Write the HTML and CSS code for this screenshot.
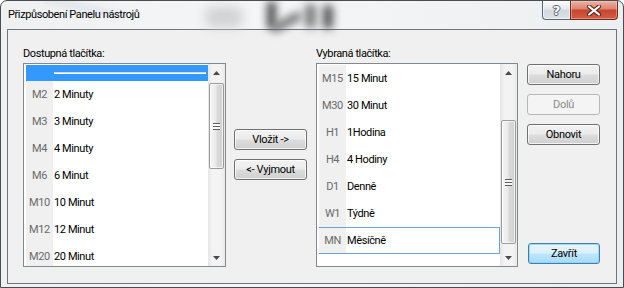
FILE: index.html
```html
<!DOCTYPE html>
<html lang="cs">
<head>
    <meta charset="UTF-8">
    <title>Přizpůsobení Panelu nástrojů</title>
    <link rel="stylesheet" href="styles.css">
</head>
<body>
    <div class="window">
        <div class="titlebar">
            <!-- blurred desktop behind the glass frame -->
            <div class="blob blob-a"></div>
            <div class="blob blob-b"></div>
            <div class="blob blob-c"></div>
            <div class="blob blob-d"></div>
            <div class="blob blob-e"></div>
            <div class="blob blob-f"></div>
            <span class="title">Přizpůsobení Panelu nástrojů</span>
            <div class="caption">
                <div class="cap-btn help"><span class="help-mark">?</span></div>
                <div class="cap-btn close">
                    <svg width="16" height="11" viewBox="0 0 16 11">
                        <path d="M3 1.5 L13 9.5 M13 1.5 L3 9.5" stroke="#5a2a22" stroke-width="4.2" stroke-linecap="round"/>
                        <path d="M3 1.5 L13 9.5 M13 1.5 L3 9.5" stroke="#ffffff" stroke-width="2.2" stroke-linecap="round"/>
                    </svg>
                </div>
            </div>
        </div>

        <div class="client">
            <div class="list-col">
                <div class="list-label">Dostupná tlačítka:</div>
                <div class="listbox">
                    <div class="items">
                        <div class="item separator selected"><span class="code"></span><span class="sep-line"></span></div>
                        <div class="item"><span class="code">M2</span><span class="name">2 Minuty</span></div>
                        <div class="item"><span class="code">M3</span><span class="name">3 Minuty</span></div>
                        <div class="item"><span class="code">M4</span><span class="name">4 Minuty</span></div>
                        <div class="item"><span class="code">M6</span><span class="name">6 Minut</span></div>
                        <div class="item"><span class="code">M10</span><span class="name">10 Minut</span></div>
                        <div class="item"><span class="code">M12</span><span class="name">12 Minut</span></div>
                        <div class="item"><span class="code">M20</span><span class="name">20 Minut</span></div>
                    </div>
                    <div class="scrollbar">
                        <div class="arrow"><svg width="7" height="4" viewBox="0 0 7 4"><path d="M0 4 L3.5 0 L7 4 Z" fill="#4a4a4a"/></svg></div>
                        <div class="track"><div class="thumb thumb-left"><span class="grip"></span></div></div>
                        <div class="arrow"><svg width="7" height="4" viewBox="0 0 7 4"><path d="M0 0 L7 0 L3.5 4 Z" fill="#4a4a4a"/></svg></div>
                    </div>
                </div>
            </div>

            <div class="move-col">
                <button class="btn">Vložit -&gt;</button>
                <button class="btn">&lt;- Vyjmout</button>
            </div>

            <div class="list-col right">
                <div class="list-label">Vybraná tlačítka:</div>
                <div class="listbox">
                    <div class="items">
                        <div class="item"><span class="code">M15</span><span class="name">15 Minut</span></div>
                        <div class="item"><span class="code">M30</span><span class="name">30 Minut</span></div>
                        <div class="item"><span class="code">H1</span><span class="name">1Hodina</span></div>
                        <div class="item"><span class="code">H4</span><span class="name">4 Hodiny</span></div>
                        <div class="item"><span class="code">D1</span><span class="name">Denně</span></div>
                        <div class="item"><span class="code">W1</span><span class="name">Týdně</span></div>
                        <div class="item focused"><span class="code">MN</span><span class="name">Měsíčně</span></div>
                    </div>
                    <div class="scrollbar">
                        <div class="arrow"><svg width="7" height="4" viewBox="0 0 7 4"><path d="M0 4 L3.5 0 L7 4 Z" fill="#4a4a4a"/></svg></div>
                        <div class="track"><div class="thumb thumb-right"><span class="grip"></span></div></div>
                        <div class="arrow"><svg width="7" height="4" viewBox="0 0 7 4"><path d="M0 0 L7 0 L3.5 4 Z" fill="#4a4a4a"/></svg></div>
                    </div>
                </div>
            </div>

            <div class="side-col">
                <button class="btn">Nahoru</button>
                <button class="btn" disabled>Dolů</button>
                <button class="btn">Obnovit</button>
                <button class="btn default close-btn">Zavřít</button>
            </div>
        </div>
    </div>
</body>
</html>
```

FILE: styles.css
```css
* {
    box-sizing: border-box;
}
body {
    margin: 0;
    font-family: Roboto, "Liberation Sans", sans-serif;
    font-size: 11px;
    letter-spacing: -0.4px;
    color: #000;
}
.window {
    width: 624px;
    height: 288px;
    border: 1px solid #4c4c4c;
    border-radius: 7px 7px 0 0;
    background: linear-gradient(90deg, #eef0f2 0%, #f5f6f7 40%, #eceff1 100%);
    display: flex;
    flex-direction: column;
    overflow: hidden;
}
.titlebar {
    position: relative;
    height: 28px;
    display: flex;
    justify-content: space-between;
    align-items: flex-start;
}
.blob {
    position: absolute;
    filter: blur(4px);
    border-radius: 4px;
}
.blob-a {
    left: 266px;
    top: 0;
    width: 9px;
    height: 28px;
    background: #4a4a4a;
}
.blob-b {
    left: 270px;
    top: 17px;
    width: 32px;
    height: 8px;
    background: #6a6a6a;
    transform: rotate(-28deg);
}
.blob-c {
    left: 304px;
    top: 3px;
    width: 11px;
    height: 24px;
    background: #7a7a7a;
}
.blob-d {
    left: 322px;
    top: 4px;
    width: 10px;
    height: 24px;
    background: #555;
}
.blob-e {
    left: 205px;
    top: 6px;
    width: 36px;
    height: 20px;
    background: #cfd1d2;
    filter: blur(6px);
}
.blob-f {
    left: 40px;
    top: 4px;
    width: 80px;
    height: 4px;
    background: #d6dde6;
    transform: rotate(12deg);
    filter: blur(3px);
}
.title {
    position: relative;
    margin: 6px 0 0 7px;
    line-height: 16px;
}
.caption {
    position: relative;
    display: flex;
    margin-right: 5px;
}
.cap-btn {
    height: 19px;
    border: 1px solid #5d6670;
    border-top: none;
    display: flex;
    align-items: center;
    justify-content: center;
}
.help {
    width: 28px;
    border-right: none;
    border-radius: 0 0 0 4px;
    background: linear-gradient(#fafbfc 0%, #e6e9ed 45%, #d2d8df 50%, #dde2e8 100%);
    box-shadow: inset 0 0 0 1px rgba(255, 255, 255, 0.6);
}
.help-mark {
    font-family: "DejaVu Sans", sans-serif;
    font-weight: bold;
    font-size: 13px;
    line-height: 13px;
    letter-spacing: 0;
    color: #fff;
    text-shadow: 1px 0 0 #55606c, -1px 0 0 #55606c, 0 1px 0 #55606c, 0 -1px 0 #55606c;
}
.close {
    width: 48px;
    border-color: #6e2c22;
    border-radius: 0 0 4px 0;
    background: linear-gradient(#eab4a6 0%, #df8571 42%, #c8452e 52%, #d35e45 100%);
    box-shadow: inset 0 0 0 1px rgba(255, 220, 210, 0.4);
}
.client {
    margin: 0 6px;
    height: 255px;
    border: 1px solid #6f7479;
    background-color: #f0f0f0;
    padding: 16px 15px 0 15px;
    display: flex;
    align-items: flex-start;
}
.list-col {
    width: 203px;
}
.list-col.right {
    width: 202px;
    margin-left: 9px;
}
.list-label {
    line-height: 15px;
    margin-bottom: 2px;
}
.listbox {
    height: 204px;
    border: 1px solid #828790;
    background-color: #fff;
    display: flex;
}
.items {
    flex: 1;
    padding: 1px 0 0 2px;
    overflow: hidden;
}
.item {
    height: 27px;
    display: flex;
    align-items: center;
}
.item .code {
    width: 27px;
    height: 100%;
    display: flex;
    align-items: center;
    justify-content: center;
    background-color: #f0f0f0;
    color: #6a6a6a;
}
.item .name {
    padding-left: 1px;
}
.item.separator {
    height: 16px;
}
.item.selected,
.item.selected .code {
    background-color: #3399ff;
}
.sep-line {
    flex: 1;
    height: 2px;
    margin: 0 2px 0 1px;
    border-top: 1px solid #d8d8d8;
    background-color: #fff;
}
.item.focused {
    border: 1px solid #6aa4e0;
}
.item.focused .code {
    margin-left: -1px;
}
.scrollbar {
    width: 17px;
    display: flex;
    flex-direction: column;
    background: linear-gradient(90deg, #e6e6e6 0%, #f3f3f3 25%, #f3f3f3 75%, #e9e9e9 100%);
}
.arrow {
    height: 17px;
    display: flex;
    align-items: center;
    justify-content: center;
}
.track {
    flex: 1;
}
.thumb {
    width: 15px;
    margin-left: 1px;
    border: 1px solid #9b9b9b;
    border-radius: 2px;
    background: linear-gradient(90deg, #f6f6f6 0%, #e9e9e9 45%, #dadada 55%, #d0d0d0 100%);
    box-shadow: inset 0 0 0 1px rgba(255, 255, 255, 0.7);
    display: flex;
    align-items: center;
    justify-content: center;
}
.thumb-left {
    margin-top: 2px;
    height: 86px;
}
.thumb-right {
    margin-top: 39px;
    height: 124px;
}
.grip {
    width: 7px;
    height: 7px;
    background: repeating-linear-gradient(#5c5c5c 0, #5c5c5c 1px, #fafafa 1px, #fafafa 3px);
}
.move-col {
    width: 73px;
    margin-left: 8px;
    padding-top: 83px;
    display: flex;
    flex-direction: column;
    gap: 9px;
}
.side-col {
    width: 73px;
    margin-left: 9px;
    padding-top: 18px;
    display: flex;
    flex-direction: column;
    gap: 9px;
}
.btn {
    height: 21px;
    padding: 0;
    font-family: inherit;
    font-size: 11px;
    letter-spacing: -0.3px;
    color: #000;
    border: 1px solid #707070;
    border-radius: 3px;
    background: linear-gradient(#f2f2f2 0%, #ebebeb 48%, #dddddd 52%, #cfcfcf 100%);
    box-shadow: inset 0 0 0 1px rgba(255, 255, 255, 0.75);
}
.btn:disabled {
    color: #8a8a8a;
    border-color: #b5b8bb;
    background: #f4f4f4;
    box-shadow: none;
}
.btn.default {
    border-color: #3c7fb1;
    background: linear-gradient(#eaf6fd 0%, #d9f0fc 48%, #bee6fd 52%, #a7d9f5 100%);
    box-shadow: inset 0 0 0 1px rgba(140, 210, 250, 0.8);
}
.close-btn {
    margin-top: 89px;
    margin-left: 1px;
}
```
